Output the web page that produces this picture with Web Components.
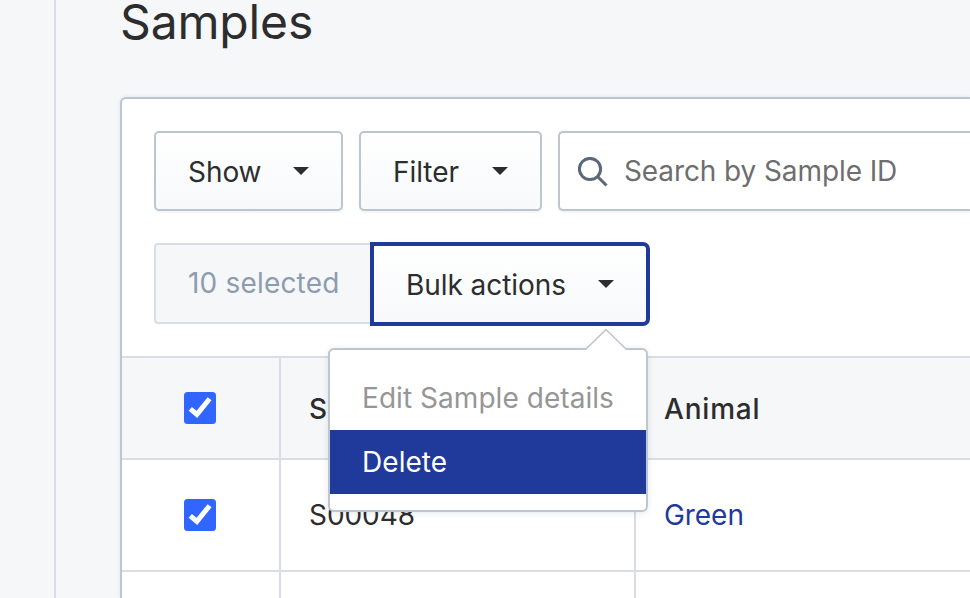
<!DOCTYPE html>
<html lang="en">
<head>
<meta charset="utf-8">
<title>Samples</title>
<style>
  html, body {
    margin: 0;
    height: 100%;
    overflow: hidden;
    background: #f5f7f9;
  }
</style>
</head>
<body>
<samples-page heading="Samples">
  <tool-bar>
    <drop-button style="width: 189px">Show</drop-button>
    <drop-button style="width: 183px">Filter</drop-button>
    <search-field placeholder="Search by Sample ID"></search-field>
  </tool-bar>
  <bulk-bar count="10">
    <drop-button active style="width: 280px">
      Bulk actions
      <drop-menu slot="menu">
        <menu-item disabled>Edit Sample details</menu-item>
        <menu-item selected>Delete</menu-item>
      </drop-menu>
    </drop-button>
  </bulk-bar>
  <sample-table>
    <sample-row header>
      <span slot="id">Sample ID</span>
      <span slot="animal">Animal</span>
    </sample-row>
    <sample-row>
      <span slot="id">S00048</span>
      <span slot="animal">Green</span>
    </sample-row>
    <sample-row empty></sample-row>
  </sample-table>
</samples-page>

<script>
const define = (name, html, setup) => {
  const template = document.createElement('template');
  template.innerHTML = html;

  window.customElements.define(name, class extends HTMLElement {
    constructor() {
      super()

      this.attachShadow({ mode: 'open' })
      this.shadowRoot.appendChild(template.content.cloneNode(true))
    }

    connectedCallback() {
      if (setup) setup(this, this.shadowRoot)
    }
  })
}

define('samples-page', /*html*/`
  <style>
    :host {
      display: grid;
      grid-template-columns: 54px 1fr;
      height: 100%;
      font: 400 28px/40px Inter, "Liberation Sans", sans-serif;
      letter-spacing: -0.06px;
      color: #2d2d2d;
    }

    main {
      display: flex;
      flex-direction: column;
      min-width: 0;
      height: 100vh;
      border-left: 2px solid #dadde4;
      padding-left: 64px;
    }

    h1 {
      flex: none;
      margin: 0;
      height: 97px;
      font-size: 48px;
      font-weight: 400;
      line-height: 44px;
      letter-spacing: -0.15px;
    }

    section {
      flex: 1;
      min-height: 0;
      border: 2px solid #bcc5d0;
      border-width: 2px 0 0 2px;
      border-radius: 6px 0 0 0;
      background: #fff;
      box-shadow: 0 0 4px rgba(45, 60, 80, .1);
    }
  </style>
  <nav></nav>
  <main>
    <h1></h1>
    <section><slot></slot></section>
  </main>
`, (el, root) => {
  root.querySelector('h1').textContent = el.getAttribute('heading');
})

define('tool-bar', /*html*/`
  <style>
    :host {
      display: flex;
      gap: 16px;
      padding: 32px 0 0 32px;
    }
  </style>
  <slot></slot>
`)

define('bulk-bar', /*html*/`
  <style>
    :host {
      display: flex;
      align-items: center;
      height: 84px;
      padding: 31px 0 30px 32px;
    }

    div {
      box-sizing: border-box;
      width: 216px;
      height: 81px;
      margin-top: -1px;
      padding: 18px 0 0 32px;
      border: 2px solid #dadde4;
      border-right: 0;
      border-radius: 4px 0 0 4px;
      background: #f5f7f9;
      color: #8e9bb0;
      letter-spacing: 0.18px;
      white-space: nowrap;
    }
  </style>
  <div></div>
  <slot></slot>
`, (el, root) => {
  root.querySelector('div').textContent = el.getAttribute('count') + ' selected';
})

define('drop-button', /*html*/`
  <style>
    :host {
      display: block;
      flex: none;
      position: relative;
    }

    button {
      box-sizing: border-box;
      display: flex;
      align-items: center;
      justify-content: space-between;
      width: 100%;
      height: 80px;
      padding: 2px 32px 0;
      border: 2px solid #bcc5d0;
      border-radius: 5px;
      background: linear-gradient(#fff, #f7f9fb);
      box-shadow: 0 2px 1px rgba(45, 60, 80, .05);
      color: inherit;
      font: inherit;
      letter-spacing: inherit;
      white-space: nowrap;
    }

    :host([active]) button {
      height: 84px;
      border: 4px solid #1f3a9a;
      border-radius: 0 7px 7px 0;
      box-shadow: none;
    }

    svg {
      display: block;
      width: 16px;
      height: 8px;
      margin-top: -2px;
      fill: #2d2d2d;
    }
  </style>
  <button><slot></slot><svg viewBox="0 0 16 8"><path d="M0 0h16L8 8z"/></svg></button>
  <slot name="menu"></slot>
`)

define('search-field', /*html*/`
  <style>
    :host {
      box-sizing: border-box;
      display: flex;
      flex: 1;
      align-items: center;
      gap: 16px;
      height: 80px;
      padding: 0 0 0 18px;
      border: 2px solid #bcc5d0;
      border-right: 0;
      border-radius: 5px 0 0 5px;
      box-shadow: 0 2px 1px rgba(45, 60, 80, .05);
      color: #6e6e6e;
      letter-spacing: -0.1px;
      white-space: nowrap;
    }

    svg {
      width: 30px;
      height: 30px;
      margin-top: 1px;
      fill: none;
      stroke: #5a687b;
      stroke-width: 3;
    }
  </style>
  <svg viewBox="0 0 30 30"><circle cx="12" cy="12" r="10.6"/><path d="M19.5 19.5l9 9"/></svg>
  <span></span>
`, (el, root) => {
  root.querySelector('span').textContent = el.getAttribute('placeholder');
})

define('drop-menu', /*html*/`
  <style>
    :host {
      position: absolute;
      top: 106px;
      right: 2px;
      z-index: 1;
      box-sizing: border-box;
      width: 320px;
      height: 164px;
      padding: 16px 0;
      border: 2px solid #bcc5d0;
      border-radius: 6px;
      background: #fff;
      box-shadow: 0 1px 6px rgba(45, 60, 80, .12);
      letter-spacing: 0.05px;
    }

    svg {
      position: absolute;
      top: -22px;
      right: 18px;
      width: 44px;
      height: 23px;
      fill: #fff;
      stroke: #bcc5d0;
      stroke-width: 1.6;
    }
  </style>
  <svg viewBox="0 0 44 23"><path stroke="none" d="M2 22L22 2l20 20v1H2z"/><path d="M1.5 21.5L22 1.5l20.500 20"/></svg>
  <slot></slot>
`)

define('menu-item', /*html*/`
  <style>
    :host {
      display: block;
      padding: 12px 32px;
      white-space: nowrap;
    }

    :host([disabled]) {
      color: #969696;
    }

    :host([selected]) {
      background: #1f3a9a;
      color: #fff;
    }
  </style>
  <slot></slot>
`)

define('check-box', /*html*/`
  <style>
    :host {
      display: block;
    }

    svg {
      display: block;
      width: 32px;
      height: 32px;
    }
  </style>
  <svg viewBox="0 0 32 32">
    <rect width="32" height="32" rx="3.500" fill="#3066ff"/>
    <path d="M6.300 16.800l6.600 5.600L25.600 6.700" fill="none" stroke="#fff" stroke-width="5"/>
  </svg>
`)

define('sample-table', /*html*/`
  <style>
    :host {
      display: block;
      border-top: 2px solid #dadde4;
    }
  </style>
  <slot></slot>
`)

define('sample-row', /*html*/`
  <style>
    :host {
      display: grid;
      grid-template-columns: 159px 355px 1fr;
      height: 110px;
      border-bottom: 2px solid #dadde4;
    }

    :host([header]) {
      height: 100px;
      background: #f5f7f9;
      font-weight: 500;
      letter-spacing: 0.8px;
    }

    :host([header]) slot {
      display: block;
      padding-top: 2px;
    }

    :host([empty]) {
      height: 26px;
      border: 0;
    }

    div {
      display: flex;
      align-items: center;
      padding-left: 28px;
    }

    div:not(:last-of-type) {
      border-right: 2px solid #dadde4;
    }

    div:first-of-type {
      padding-left: 62px;
    }

    :host(:not([header])) div:last-of-type {
      color: #1f3a9a;
    }

    :host([empty]) check-box {
      display: none;
    }
  </style>
  <div><check-box></check-box></div>
  <div><slot name="id"></slot></div>
  <div><slot name="animal"></slot></div>
`)
</script>
</body>
</html>
